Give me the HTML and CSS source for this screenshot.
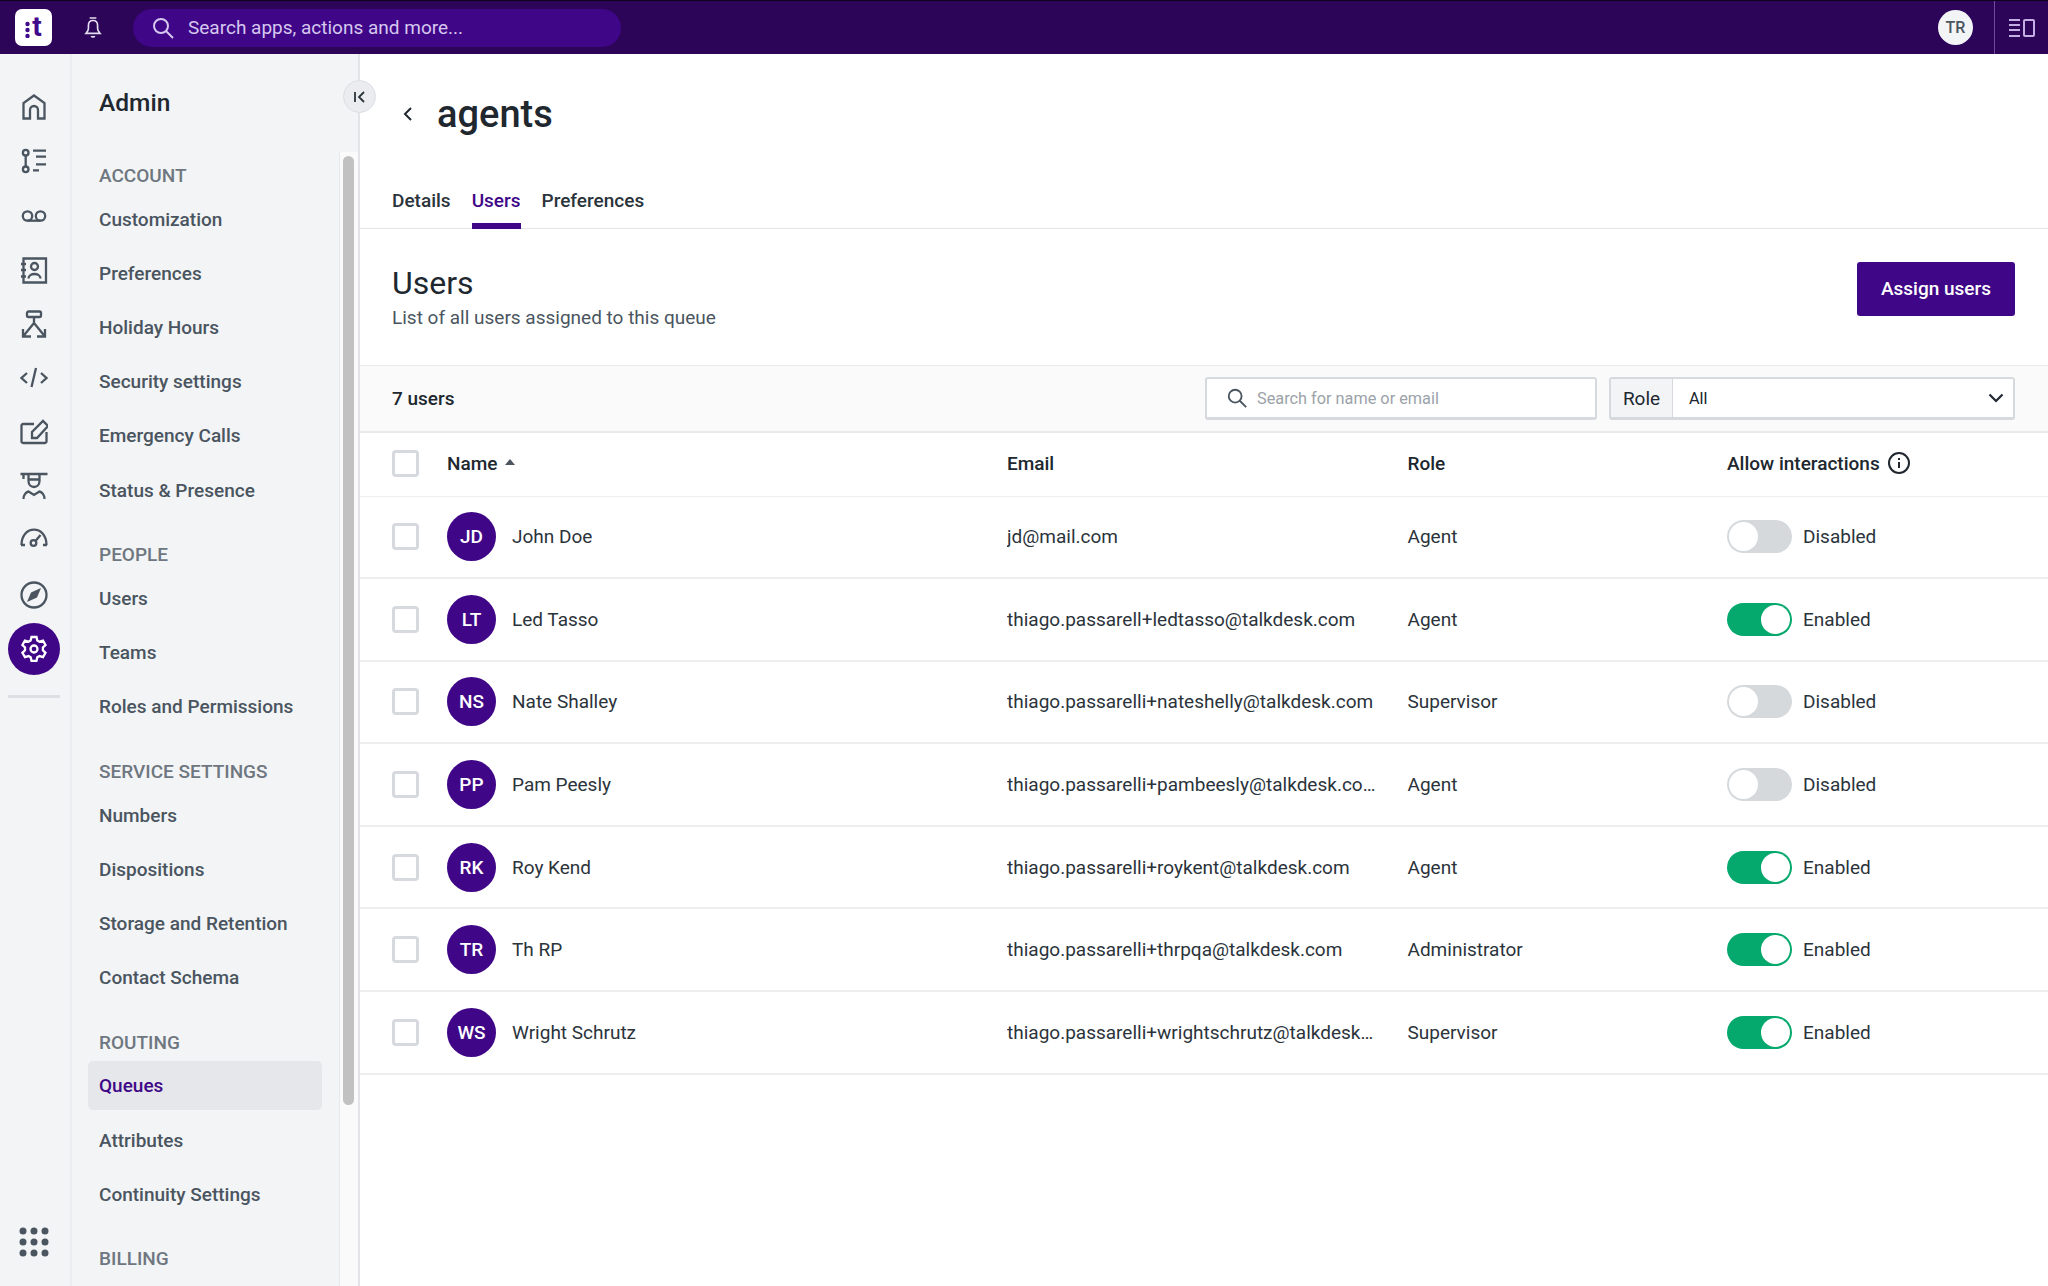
FILE: index.html
```html
<!DOCTYPE html>
<html lang="en">
<head>
<meta charset="utf-8">
<title>agents</title>
<link rel="stylesheet" href="styles.css">
</head>
<body>
<header class="topbar">
  <div class="logo"><svg class="logo-dots" viewBox="0 0 5 19" width="5" height="19"><circle cx="2.500" cy="5" r="2.200"/><circle cx="2.500" cy="11" r="2.200"/><circle cx="2.500" cy="17" r="2.200"/></svg><span class="logo-t">t</span></div>
  <svg class="bell" viewBox="0 0 24 28" width="20" height="26"><path d="M8 2h8M12 5c-4 0-5.500 3-5.500 6v3.500c0 2.500-1.500 4-3 6h17c-1.500-2-3-3.500-3-6V11c0-3-1.500-6-5.500-6zM10 23.500c.5 1.500 3.500 1.500 4 0" fill="none" stroke="currentColor" stroke-width="2"/></svg>
  <div class="global-search">
    <svg viewBox="0 0 24 24" width="24" height="24"><circle cx="10" cy="10" r="7" fill="none" stroke="currentColor" stroke-width="2"/><path d="M15 15l7 7" stroke="currentColor" stroke-width="2"/></svg>
    <span>Search apps, actions and more...</span>
  </div>
  <div class="spacer"></div>
  <div class="me">TR</div>
  <div class="panel-toggle">
    <svg viewBox="0 0 26 20" width="26" height="20"><path d="M0 2h11M0 7h11M0 12h11M0 18h11" stroke="currentColor" stroke-width="2"/><rect x="15" y="2" width="10" height="16" rx="1" fill="none" stroke="currentColor" stroke-width="2"/></svg>
  </div>
</header>
<div class="shell">
  <nav class="rail">
    <div class="rail-item"><svg viewBox="0 0 28 28"><path d="M3.500 25.500V10L14 2.500 24.500 10v15.500H18V17a4 4 0 0 0-8 0v8.500z"/></svg></div>
    <div class="rail-item"><svg viewBox="0 0 28 28"><circle cx="5.700" cy="5.700" r="2.800"/><circle cx="5.700" cy="22.300" r="2.800"/><path d="M5.700 8.500v11M13 3.700h13M16 9.700h10M16 17.300h10M13 23.300h6"/></svg></div>
    <div class="rail-item"><svg viewBox="0 0 28 28"><circle cx="7.500" cy="15" r="4.700"/><circle cx="20.500" cy="15" r="4.700"/><path d="M7.500 19.700h13"/></svg></div>
    <div class="rail-item"><svg viewBox="0 0 28 28"><path d="M3.500 2.500h22.500v24H3.500zM1 8h5M1 14h5M1 20.500h5"/><circle cx="14.500" cy="10.500" r="3.500"/><path d="M8.500 22.500c0-6 12-6 12 0"/></svg></div>
    <div class="rail-item"><svg viewBox="0 0 28 28"><rect x="7" y="1.500" width="14" height="5.500" rx="1.500"/><path d="M14 7v6L3 26.500M14 13l11 13.500M3 19v7.500h8M25 19v7.500h-8"/></svg></div>
    <div class="rail-item"><svg viewBox="0 0 28 28"><path d="M7 9l-5.500 5L7 19M21 9l5.500 5-5.500 5M16 4l-4.500 19"/></svg></div>
    <div class="rail-item"><svg viewBox="0 0 28 28"><path d="M14 6H3a1.500 1.500 0 0 0-1.500 1.500v16A1.500 1.500 0 0 0 3 25h22a1.500 1.500 0 0 0 1.500-1.500V14"/><path d="M12 20v-6L23 3l5 5-11 12z"/></svg></div>
    <div class="rail-item"><svg viewBox="0 0 28 28"><path d="M.5 2h27M3.500 2v5M8.500 2v7c0 8 11 8 11 0V2M8.500 7.500h11M3.500 27c0-4 2.500-7 5-7.500l5.500 3.500 5.500-3.500c2.500.5 5 3.500 5 7.500"/></svg></div>
    <div class="rail-item"><svg viewBox="0 0 28 28"><path d="M1.500 18C1.500 -2.500 26.500 -2.500 26.500 18M1 18h4M23 18h4M15.500 14l5-6"/><circle cx="13.500" cy="16" r="2.800"/></svg></div>
    <div class="rail-item"><svg viewBox="0 0 28 28"><circle cx="14" cy="14" r="12.500"/><path class="solid" d="M21 7l-4 9.500L7 21l4-9.500z"/></svg></div>
    <div class="rail-item active"><span class="gear-wrap"><svg viewBox="0 0 28 28"><path d="M11.500 2h5l.8 3.500 2.200 1.200 3.500-1 2.500 4.300-2.600 2.500v2.800l2.600 2.500-2.500 4.300-3.500-1-2.200 1.200-.8 3.500h-5l-.8-3.500-2.200-1.200-3.500 1L2.400 17.800 5 15.300v-2.800L2.400 10l2.500-4.300 3.500 1 2.200-1.200z"/><circle cx="14" cy="14" r="3.500"/></svg></span></div>
    <div class="rail-sep"></div>
    <div class="spacer"></div>
    <svg class="apps" viewBox="0 0 30 30" width="30" height="30"><circle cx="4" cy="4" r="3.500"/><circle cx="15" cy="4" r="3.500"/><circle cx="26" cy="4" r="3.500"/><circle cx="4" cy="15" r="3.500"/><circle cx="15" cy="15" r="3.500"/><circle cx="26" cy="15" r="3.500"/><circle cx="4" cy="26" r="3.500"/><circle cx="15" cy="26" r="3.500"/><circle cx="26" cy="26" r="3.500"/></svg>
  </nav>
  <aside class="side">
    <h2 class="side-title">Admin</h2>
    <button class="collapse" type="button"><svg viewBox="0 0 14 14" width="14" height="14"><path d="M2 2v10M11 2L6 7l5 5" fill="none" stroke="currentColor" stroke-width="1.800"/></svg></button>
    <div class="side-body">
      <div class="side-scroll">
        <div class="sec">ACCOUNT</div>
        <a class="item">Customization</a><a class="item">Preferences</a><a class="item">Holiday Hours</a><a class="item">Security settings</a><a class="item">Emergency Calls</a><a class="item">Status &amp; Presence</a>
        <div class="sec">PEOPLE</div>
        <a class="item">Users</a><a class="item">Teams</a><a class="item">Roles and Permissions</a>
        <div class="sec">SERVICE SETTINGS</div>
        <a class="item">Numbers</a><a class="item">Dispositions</a><a class="item">Storage and Retention</a><a class="item">Contact Schema</a>
        <div class="sec">ROUTING</div>
        <a class="item selected">Queues</a><a class="item">Attributes</a><a class="item">Continuity Settings</a>
        <div class="sec">BILLING</div>
      </div>
      <div class="track"><div class="thumb"></div></div>
    </div>
  </aside>
  <main class="content">
    <div class="page-head">
      <svg viewBox="0 0 12 16" width="12" height="16"><path d="M9 2L3 8l6 6" fill="none" stroke="currentColor" stroke-width="2"/></svg>
      <h1>agents</h1>
    </div>
    <div class="tabs"><a class="tab">Details</a><a class="tab on">Users</a><a class="tab">Preferences</a></div>
    <section class="intro">
      <div>
        <h2>Users</h2>
        <p>List of all users assigned to this queue</p>
      </div>
      <button class="primary" type="button">Assign users</button>
    </section>
    <div class="toolbar">
      <strong>7 users</strong>
      <div class="spacer"></div>
      <div class="field search">
        <svg viewBox="0 0 24 24" width="22" height="22"><circle cx="10" cy="10" r="7" fill="none" stroke="currentColor" stroke-width="2"/><path d="M15 15l7 7" stroke="currentColor" stroke-width="2"/></svg>
        <span>Search for name or email</span>
      </div>
      <div class="field role">
        <span class="role-label">Role</span>
        <span class="role-value">All</span>
        <svg viewBox="0 0 16 10" width="16" height="10"><path d="M1.500 1.500L8 8l6.500-6.500" fill="none" stroke="currentColor" stroke-width="2.200"/></svg>
      </div>
    </div>
    <div class="row head">
      <span class="check"></span>
      <span class="name-h">Name <i class="sort"></i></span>
      <span>Email</span>
      <span>Role</span>
      <span class="allow">Allow interactions <svg viewBox="0 0 24 24" width="24" height="24"><circle cx="12" cy="12" r="10" fill="none" stroke="currentColor" stroke-width="2"/><path d="M12 11v6M12 7v2" stroke="currentColor" stroke-width="2"/></svg></span>
    </div>
    <div class="row"><span class="check"></span><span class="user"><b class="av">JD</b>John Doe</span><span class="email">jd@mail.com</span><span>Agent</span><span class="state"><i class="sw"></i>Disabled</span></div>
    <div class="row"><span class="check"></span><span class="user"><b class="av">LT</b>Led Tasso</span><span class="email">thiago.passarell+ledtasso@talkdesk.com</span><span>Agent</span><span class="state"><i class="sw on"></i>Enabled</span></div>
    <div class="row"><span class="check"></span><span class="user"><b class="av">NS</b>Nate Shalley</span><span class="email">thiago.passarelli+nateshelly@talkdesk.com</span><span>Supervisor</span><span class="state"><i class="sw"></i>Disabled</span></div>
    <div class="row"><span class="check"></span><span class="user"><b class="av">PP</b>Pam Peesly</span><span class="email">thiago.passarelli+pambeesly@talkdesk.com</span><span>Agent</span><span class="state"><i class="sw"></i>Disabled</span></div>
    <div class="row"><span class="check"></span><span class="user"><b class="av">RK</b>Roy Kend</span><span class="email">thiago.passarelli+roykent@talkdesk.com</span><span>Agent</span><span class="state"><i class="sw on"></i>Enabled</span></div>
    <div class="row"><span class="check"></span><span class="user"><b class="av">TR</b>Th RP</span><span class="email">thiago.passarelli+thrpqa@talkdesk.com</span><span>Administrator</span><span class="state"><i class="sw on"></i>Enabled</span></div>
    <div class="row"><span class="check"></span><span class="user"><b class="av">WS</b>Wright Schrutz</span><span class="email">thiago.passarelli+wrightschrutz@talkdesk.com</span><span>Supervisor</span><span class="state"><i class="sw on"></i>Enabled</span></div>
  </main>
</div>
</body>
</html>
```
FILE: styles.css
```css
* { box-sizing: border-box; }
html, body { margin: 0; height: 100%; overflow: hidden; }
body { font-family: Roboto, "Liberation Sans", sans-serif; font-size: 19px; color: #20272e; background: #fff; display: flex; flex-direction: column; }
.spacer { flex: 1; }

.topbar { height: 54px; flex: none; background: #2c0559; border-top: 1px solid #10021f; display: flex; align-items: center; color: #cdbbec; }
.logo { width: 37px; height: 37px; margin-left: 15px; background: #fff; border-radius: 7px; display: flex; align-items: center; justify-content: center; gap: 2px; color: #3f0a8c; font-weight: 700; font-size: 28px; line-height: 1; }
.logo-dots { fill: #3f0a8c; margin-top: 2px; }
.logo-t { position: relative; top: -1px; }
.bell { margin-left: 31px; color: #e3ddef; }
.global-search { width: 488px; height: 38px; margin-left: 30px; background: #3f0787; border-radius: 19px; display: flex; align-items: center; gap: 13px; padding-left: 18px; color: #d6c8f0; }
.me { width: 35px; height: 35px; border-radius: 50%; background: #f3f4f6; color: #4a5560; font-size: 16px; font-weight: 500; display: flex; align-items: center; justify-content: center; margin-right: 21px; }
.panel-toggle { width: 54px; height: 53px; border-left: 1px solid #6e4a9e; display: flex; align-items: center; justify-content: center; color: #c3aee6; }

.shell { flex: 1; display: flex; min-height: 0; }
.rail { width: 72px; flex: none; background: #f3f4f6; border-right: 2px solid #ecedf0; display: flex; flex-direction: column; align-items: center; padding: 26px 2px 29px 0; }
.rail-item { height: 54.2px; width: 100%; display: flex; align-items: center; justify-content: center; color: #4a5560; }
.rail-item svg { width: 28px; height: 28px; fill: none; stroke: currentColor; stroke-width: 2.300; }
.rail-item svg .solid { fill: currentColor; stroke: none; }
.gear-wrap { width: 52px; height: 52px; border-radius: 50%; background: #3f0787; display: flex; align-items: center; justify-content: center; color: #fff; }
.rail-sep { width: 52px; height: 3px; background: #dcdfe3; margin-top: 19px; }
.apps { fill: #4a5560; }

.side { width: 288px; flex: none; background: #f3f4f6; border-right: 2px solid #e2e4e8; position: relative; display: flex; flex-direction: column; }
.side-title { margin: 0; padding: 34px 0 0 27px; height: 98px; font-size: 24.500px; font-weight: 500; line-height: 30px; }
.collapse { position: absolute; left: 271px; top: 26px; width: 33px; height: 33px; border-radius: 50%; border: 1px solid #dcdfe3; background: #ebecef; color: #2b333b; padding: 0; display: flex; align-items: center; justify-content: center; }
.side-body { flex: 1; min-height: 0; display: flex; overflow: hidden; }
.side-scroll { width: 268px; border-right: 1px solid #e8e9ec; padding: 9px 17px 0 16px; flex: none; }
.track { flex: 1; background: #fafafa; padding: 4px 3px 0 3px; }
.thumb { height: 949px; width: 11px; background: #c1c1c1; border-radius: 6px; }
.sec { font-size: 19px; color: #6e7780; height: 30px; line-height: 30px; margin: 25.600px 0 3.700px 11px; font-weight: 500; }
.sec:first-child { margin-top: 0; }
.item { display: flex; align-items: center; height: 49px; margin-bottom: 5.200px; padding-left: 11px; font-weight: 500; color: #4a5560; border-radius: 5px; }
.item.selected { background: #e6e7ea; color: #3f0787; }

.content { flex: 1; min-width: 0; }
.page-head { height: 120px; display: flex; align-items: center; padding: 0 0 0 42px; gap: 23px; color: #20272e; }
.page-head h1 { margin: 0; font-size: 38px; font-weight: 500; line-height: 44px; }
.tabs { display: flex; height: 55px; align-items: flex-end; padding-left: 32px; gap: 21px; border-bottom: 1px solid #e3e5e8; }
.tab { height: 46px; display: flex; align-items: flex-start; padding-top: 6px; font-weight: 500; color: #2b333b; border-bottom: 6px solid transparent; margin-bottom: -1px; }
.tab.on { color: #3f0787; border-bottom-color: #3f0787; }
.intro { height: 136px; display: flex; justify-content: space-between; padding: 33px 33px 0 32px; }
.intro h2 { margin: 0; font-size: 32px; font-weight: 400; line-height: 42px; }
.intro p { margin: 2px 0 0; font-size: 19px; line-height: 24px; color: #4a5560; }
.primary { width: 158px; height: 54px; padding: 0 0 2px; background: #3f0787; border: 0; border-radius: 3px; color: #fff; font: 500 19px Roboto, sans-serif; }
.toolbar { height: 68px; display: flex; align-items: center; padding: 0 33px 0 32px; background: #fafafa; border-top: 1px solid #e8e9ec; border-bottom: 2px solid #e8e9ec; }
.toolbar strong { font-weight: 500; }
.field { height: 43px; border: 2px solid #d6d9dd; border-bottom-width: 3px; border-radius: 3px; background: #fff; display: flex; align-items: center; font-size: 16.300px; }
.search { width: 392px; padding-left: 19px; gap: 9px; color: #9ba2a9; }
.search svg { color: #4a5560; }
.role { width: 406px; margin-left: 12px; color: #20272e; }
.role-label { width: 62px; height: 100%; display: flex; align-items: center; justify-content: center; background: #f3f4f6; border-right: 1px solid #d6d9dd; font-size: 19px; }
.role-value { flex: 1; padding-left: 16px; }
.role svg { margin-right: 9px; }

.row { display: grid; grid-template-columns: 55px 560px 400.500px 319.500px 1fr; align-items: center; height: 82.600px; padding-left: 32px; border-bottom: 2px solid #eceef0; color: #2b333b; }
.row.head { height: 63.500px; padding-bottom: 2px; font-weight: 500; color: #20272e; border-bottom-width: 1px; }
.check { width: 27px; height: 27px; border: 3px solid #d6d9dd; border-radius: 4px; background: #fff; }
.name-h { display: flex; align-items: center; gap: 8px; }
.sort { width: 0; height: 0; border: 5.500px solid transparent; border-top: 0; border-bottom: 6px solid #4a5560; position: relative; top: -1px; }
.allow { display: flex; align-items: center; gap: 7px; white-space: nowrap; }
.user { display: flex; align-items: center; gap: 16px; }
.av { width: 49px; height: 49px; border-radius: 50%; background: #3f0787; color: #fff; font-weight: 500; display: flex; align-items: center; justify-content: center; }
.email { width: 369px; overflow: hidden; white-space: nowrap; text-overflow: ellipsis; }
.state { display: flex; align-items: center; gap: 11px; }
.sw { width: 65px; height: 33px; border-radius: 17px; background: #d6d9dc; position: relative; display: block; }
.sw::after { content: ""; position: absolute; left: 2px; top: 2px; width: 29px; height: 29px; border-radius: 50%; background: #fff; }
.sw.on { background: #06a96d; }
.sw.on::after { left: 34px; }
```
